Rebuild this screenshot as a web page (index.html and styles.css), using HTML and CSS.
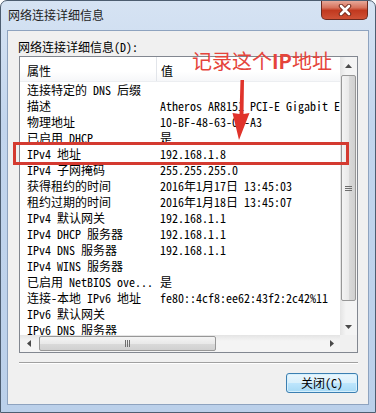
FILE: index.html
```html
<!DOCTYPE html>
<html lang="zh-CN">
<head>
    <meta charset="UTF-8">
    <title>网络连接详细信息</title>
    <link rel="stylesheet" href="styles.css">
</head>
<body>

    <div class="window">
        <div class="titlebar">
            <span class="title">网络连接详细信息</span>
            <div class="close">
                <svg width="16" height="12" viewBox="0 0 16 12">
                    <path d="M4 2 L12 10 M12 2 L4 10" stroke="#6a2418" stroke-width="4.5" stroke-linecap="round"/>
                    <path d="M4 2 L12 10 M12 2 L4 10" stroke="#fff" stroke-width="2.6" stroke-linecap="round"/>
                </svg>
            </div>
        </div>

        <div class="panel">
            <div class="label">网络连接详细信息(D):</div>

            <div class="listbox">
                <div class="view">
                    <div class="header">
                        <div class="hcell c1">属性</div>
                        <div class="hcell c2">值</div>
                    </div>
                    <div class="row"><span class="c1">连接特定的 DNS 后缀</span><span class="c2"></span></div>
                    <div class="row"><span class="c1">描述</span><span class="c2">Atheros AR8151 PCI-E Gigabit Ethernet Controller</span></div>
                    <div class="row"><span class="c1">物理地址</span><span class="c2">10-BF-48-63-0E-A3</span></div>
                    <div class="row"><span class="c1">已启用 DHCP</span><span class="c2">是</span></div>
                    <div class="row"><span class="c1">IPv4 地址</span><span class="c2">192.168.1.8</span></div>
                    <div class="row"><span class="c1">IPv4 子网掩码</span><span class="c2">255.255.255.0</span></div>
                    <div class="row"><span class="c1">获得租约的时间</span><span class="c2">2016年1月17日 13:45:03</span></div>
                    <div class="row"><span class="c1">租约过期的时间</span><span class="c2">2016年1月18日 13:45:07</span></div>
                    <div class="row"><span class="c1">IPv4 默认网关</span><span class="c2">192.168.1.1</span></div>
                    <div class="row"><span class="c1">IPv4 DHCP 服务器</span><span class="c2">192.168.1.1</span></div>
                    <div class="row"><span class="c1">IPv4 DNS 服务器</span><span class="c2">192.168.1.1</span></div>
                    <div class="row"><span class="c1">IPv4 WINS 服务器</span><span class="c2"></span></div>
                    <div class="row"><span class="c1">已启用 NetBIOS ove...</span><span class="c2">是</span></div>
                    <div class="row"><span class="c1">连接-本地 IPv6 地址</span><span class="c2">fe80::4cf8:ee62:43f2:2c42%11</span></div>
                    <div class="row"><span class="c1">IPv6 默认网关</span><span class="c2"></span></div>
                    <div class="row"><span class="c1">IPv6 DNS 服务器</span><span class="c2"></span></div>
                </div>

                <div class="vscroll">
                    <div class="sbtn">
                        <svg width="7" height="4" viewBox="0 0 7 4"><path d="M0 4 L3.5 0 L7 4 Z" fill="#4a4a4a"/></svg>
                    </div>
                    <div class="vtrack">
                        <div class="vthumb">
                            <svg width="7" height="7" viewBox="0 0 7 7"><path d="M0 1.5 H7 M0 3.5 H7 M0 5.5 H7" stroke="#6e6e6e" stroke-width="1"/></svg>
                        </div>
                    </div>
                    <div class="sbtn">
                        <svg width="7" height="4" viewBox="0 0 7 4"><path d="M0 0 L3.5 4 L7 0 Z" fill="#4a4a4a"/></svg>
                    </div>
                </div>

                <div class="hscroll">
                    <div class="sbtn">
                        <svg width="4" height="7" viewBox="0 0 4 7"><path d="M4 0 L0 3.5 L4 7 Z" fill="#4a4a4a"/></svg>
                    </div>
                    <div class="htrack">
                        <div class="hthumb">
                            <svg width="7" height="7" viewBox="0 0 7 7"><path d="M1.5 0 V7 M3.5 0 V7 M5.5 0 V7" stroke="#6e6e6e" stroke-width="1"/></svg>
                        </div>
                    </div>
                    <div class="sbtn">
                        <svg width="4" height="7" viewBox="0 0 4 7"><path d="M0 0 L4 3.5 L0 7 Z" fill="#4a4a4a"/></svg>
                    </div>
                </div>
                <div class="corner"></div>
            </div>

            <div class="sep"></div>

            <div class="actions">
                <button class="btn">关闭(C)</button>
            </div>
        </div>

        <!-- 标注 -->
        <div class="note">记录这个<b>IP</b>地址</div>
        <svg class="arrow" width="24" height="66" viewBox="230 78 24 66">
            <polygon points="240.5,80 244,80 243.5,114 249.5,113 239,140 232.5,113 239.5,114" fill="#e0332b"/>
        </svg>
        <div class="mark"></div>
    </div>

</body>
</html>
```

FILE: styles.css
```css
body { margin: 0; background: #fff; }

.window { position: relative; width: 376px; height: 413px; box-sizing: border-box; border: 1px solid #4d5d70; border-radius: 7px 7px 0 0; background: linear-gradient(#d6e3f3, #c2d5ed 30%, #bbd0ea); display: flex; flex-direction: column; overflow: hidden; font-family: "Noto Sans CJK SC", sans-serif; font-size: 12px; color: #000; }

.titlebar { height: 29px; flex: none; display: flex; align-items: flex-start; justify-content: space-between; padding-left: 7px; }
.title { margin-top: 6px; line-height: 16px; color: #1e1e1e; }
.close { width: 47px; height: 20px; margin-top: -1px; margin-right: 7px; box-sizing: border-box; border: 1px solid #6b2a20; border-top: none; border-radius: 0 0 5px 5px; background: linear-gradient(#eab0a2, #d7735d 40%, #c1391f 55%, #cf5136); display: flex; align-items: center; justify-content: center; }

.panel { flex: 1; margin: 0 6px 7px; border: 1px solid #8ea3bf; background: #f0f0f0; display: flex; flex-direction: column; }
.label { margin: 8px 10px 1px; line-height: 16px; font-family: "Noto Sans Mono CJK SC", "Noto Sans CJK SC", monospace; }

.listbox { margin: 0 10px 0 11px; height: 297px; flex: none; box-sizing: border-box; border: 1px solid #828790; background: #fff; display: grid; grid-template-columns: 1fr 17px; grid-template-rows: 1fr 17px; font-family: "Noto Sans Mono CJK SC", "Noto Sans CJK SC", monospace; }
.view { overflow: hidden; min-width: 0; min-height: 0; }

.header { display: flex; height: 25px; box-sizing: border-box; border-bottom: 1px solid #eceef1; background: linear-gradient(#fff, #fff 60%, #f6f7f9); }
.hcell { line-height: 16px; padding-top: 6px; box-sizing: border-box; }
.hcell.c1 { width: 137px; flex: none; padding-left: 7px; border-right: 1px solid #e2e5ea; }
.hcell.c2 { padding-left: 4px; }

.row { display: flex; height: 16px; line-height: 16px; white-space: nowrap; }
.row .c1 { width: 137px; flex: none; padding-left: 7px; box-sizing: border-box; overflow: hidden; }
.row .c2 { padding-left: 3px; }

.vscroll { display: flex; flex-direction: column; background: linear-gradient(to right, #e4e4e4, #f4f4f4 35%, #f4f4f4); }
.hscroll { display: flex; background: linear-gradient(#e4e4e4, #f4f4f4 35%, #f4f4f4); }
.sbtn { width: 17px; height: 17px; flex: none; display: flex; align-items: center; justify-content: center; }
.vtrack { flex: 1; }
.htrack { flex: 1; }
.vthumb { margin: 1px 1px 0; height: 226px; box-sizing: border-box; border: 1px solid #979797; border-radius: 2px; background: linear-gradient(to right, #f4f4f4, #e9e9e9 50%, #dadada 50%, #d0d0d0); display: flex; align-items: center; justify-content: center; }
.hthumb { margin: 1px 0 0 2px; width: 177px; height: 15px; box-sizing: border-box; border: 1px solid #979797; border-radius: 2px; background: linear-gradient(#f4f4f4, #e9e9e9 50%, #dadada 50%, #d0d0d0); display: flex; align-items: center; justify-content: center; }
.corner { background: #f0f0f0; }

.sep { margin: 9px 10px 0 11px; border-top: 1px solid #a0a0a0; border-bottom: 1px solid #fff; }
.actions { display: flex; justify-content: flex-end; margin: 9px 10px 0; }
.btn { width: 72px; height: 20px; padding: 0; border: 1px solid #3c7fb1; border-radius: 3px; background: linear-gradient(#eaf6fd, #d9f0fc 50%, #bee6fd 50%, #a7d9f5); box-shadow: inset 0 0 0 1px #d6f0fd; font-family: "Noto Sans Mono CJK SC", "Noto Sans CJK SC", monospace; font-size: 12px; color: #000; line-height: 16px; }

.note { position: absolute; left: 191px; top: 50px; font-size: 20px; line-height: 20px; color: #e5443b; white-space: nowrap; }
.note b { font-weight: bold; }
.arrow { position: absolute; left: 229px; top: 77px; }
.mark { position: absolute; left: 12px; top: 141px; width: 336px; height: 23px; box-sizing: border-box; border: 3px solid #d43a30; }
```
